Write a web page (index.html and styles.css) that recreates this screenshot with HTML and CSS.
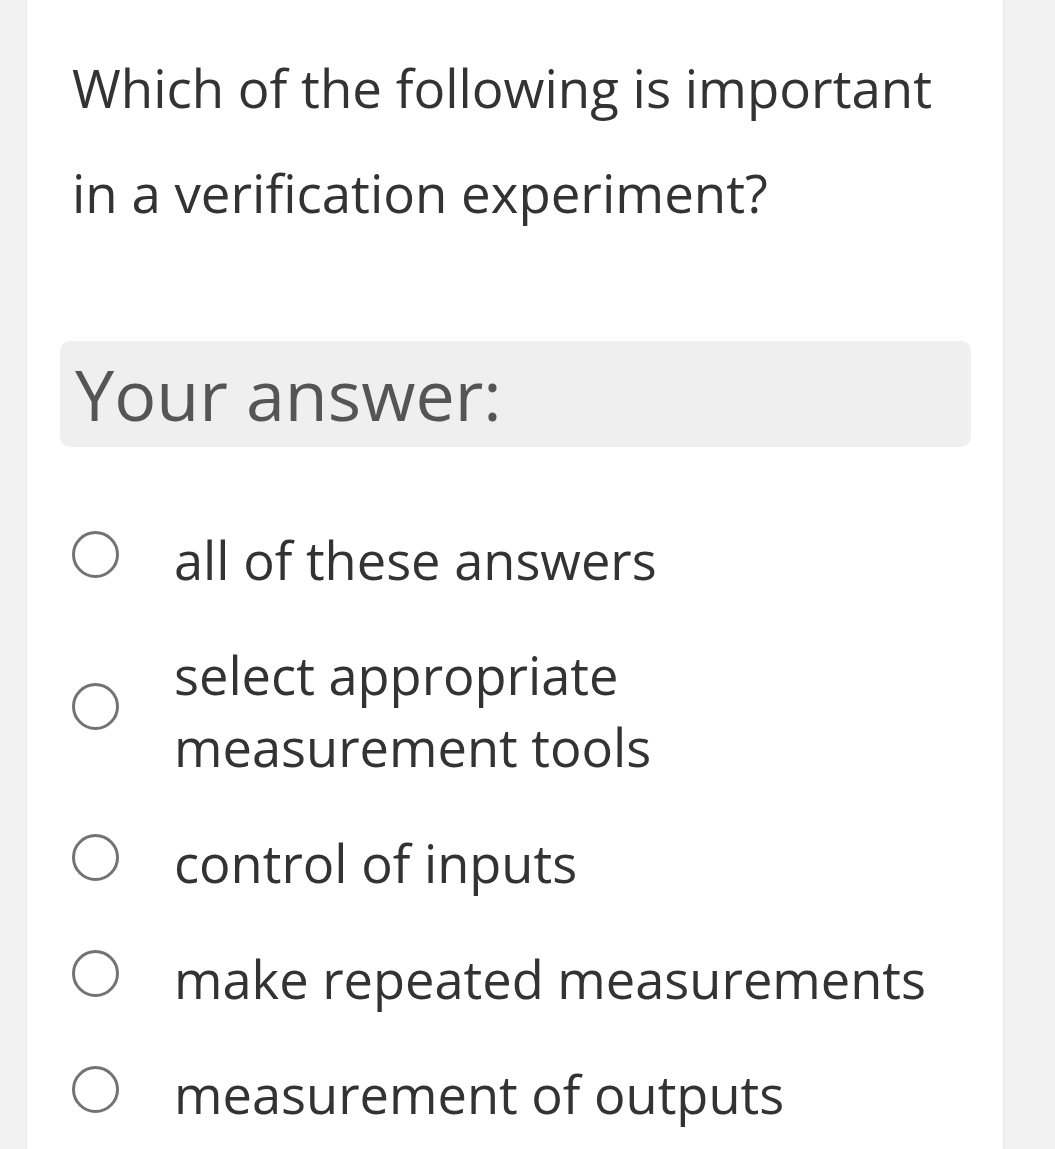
FILE: index.html
```html
<!DOCTYPE html>
<html>
<head>
<meta charset="utf-8">
<link rel="stylesheet" href="styles.css">
</head>
<body>
<div class="card">
  <div class="question">Which of the following is important in a verification experiment?</div>
  <div class="answer-label">Your answer:</div>
  <div class="options">
    <div class="option"><span class="radio"></span><span class="text">all of these answers</span></div>
    <div class="option"><span class="radio"></span><span class="text">select appropriate<br>measurement tools</span></div>
    <div class="option"><span class="radio"></span><span class="text">control of inputs</span></div>
    <div class="option"><span class="radio"></span><span class="text">make repeated measurements</span></div>
    <div class="option"><span class="radio"></span><span class="text">measurement of outputs</span></div>
  </div>
</div>
</body>
</html>
```
FILE: styles.css
```css
html, body {
  margin: 0;
  padding: 0;
  background: #f2f2f2;
  height: 100%;
  overflow: hidden;
}
body {
  font-family: "Open Sans", "Noto Sans", sans-serif;
}
.card {
  margin-left: 26px;
  width: 976px;
  min-height: 100%;
  background: #fff;
  border-left: 1px solid #e9e9e9;
  border-right: 1px solid #e9e9e9;
  padding: 35px 0 0 0;
  box-sizing: content-box;
}
.question {
  padding-left: 45px;
  width: 890px;
  font-size: 52.8px;
  line-height: 105px;
  color: #333;
}
.answer-label {
  margin: 96px 32px 0 33px;
  height: 106px;
  border-radius: 10px;
  background: #efefef;
  padding-left: 15px;
  font-size: 70px;
  line-height: 106px;
  color: #555;
}
.options {
  margin-top: 55px;
  padding-left: 45px;
}
.option {
  display: flex;
  align-items: center;
  padding: 21.8px 0;
}
.radio {
  flex: none;
  width: 41px;
  height: 41px;
  border: 3px solid #737373;
  border-radius: 50%;
  margin-right: 55px;
  position: relative;
  top: -5px;
}
.text {
  font-size: 52.4px;
  line-height: 72px;
  color: #333;
}
```
